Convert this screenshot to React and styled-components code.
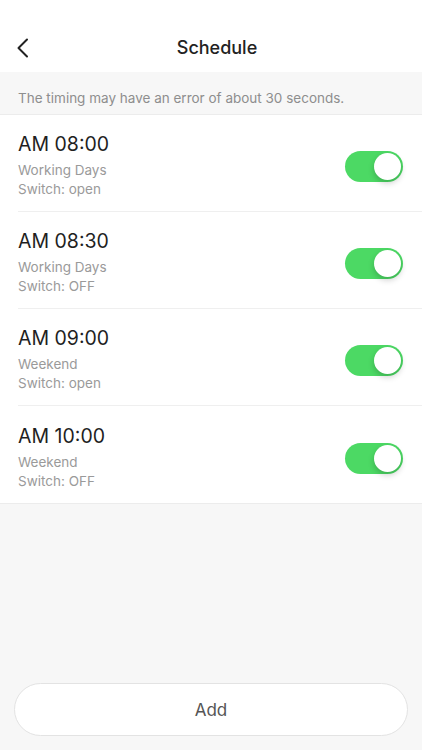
import React, { useState } from "react";
import styled, { createGlobalStyle } from "styled-components";

const GlobalStyle = createGlobalStyle`
  html, body {
    margin: 0;
    padding: 0;
    background: #f7f7f7;
  }
  body {
    font-family: Inter, "Noto Sans", "Liberation Sans", sans-serif;
    -webkit-font-smoothing: antialiased;
  }
`;

const Page = styled.div`
  width: 422px;
  height: 750px;
  display: flex;
  flex-direction: column;
  background: #f7f7f7;
`;

const Header = styled.header`
  height: 72px;
  background: #fff;
  display: grid;
  grid-template-columns: 72px 1fr 60px;
  align-items: end;
  padding-bottom: 12px;
  box-sizing: border-box;
`;

const BackButton = styled.button`
  border: none;
  background: none;
  padding: 0 0 0 16px;
  display: flex;
  align-items: center;
  height: 24px;
  cursor: pointer;
`;

const Title = styled.h1`
  margin: 0;
  text-align: center;
  font-size: 18px;
  font-weight: 500;
  color: #222;
  line-height: 24px;
`;

const Notice = styled.div`
  height: 43px;
  display: flex;
  align-items: flex-end;
  padding: 0 18px 8px;
  box-sizing: border-box;
  font-size: 13.5px;
  color: #8e8e8e;
  border-bottom: 1px solid #ececec;
`;

const List = styled.ul`
  list-style: none;
  margin: 0;
  padding: 0 0 0 18px;
  background: #fff;
  border-bottom: 1px solid #ececec;
`;

const Row = styled.li`
  height: 97px;
  box-sizing: border-box;
  display: flex;
  align-items: center;
  justify-content: space-between;
  padding: 4px 19px 0 0;
  border-bottom: ${(p) => (p.$last ? "none" : "1px solid #efefef")};
`;

const Info = styled.div`
  display: flex;
  flex-direction: column;
`;

const Time = styled.div`
  font-size: 19.5px;
  color: #1f1f1f;
  line-height: 26px;
  margin-bottom: 4px;
`;

const Sub = styled.div`
  font-size: 13.5px;
  color: #9a9a9a;
  line-height: 19px;
`;

const Toggle = styled.button`
  width: 58px;
  height: 31px;
  border-radius: 16px;
  border: none;
  padding: 0;
  margin-top: 3px;
  background: ${(p) => (p.$on ? "#4cd964" : "#e5e5e5")};
  position: relative;
  cursor: pointer;
  flex-shrink: 0;
`;

const Knob = styled.span`
  position: absolute;
  top: 2px;
  left: ${(p) => (p.$on ? "29px" : "2px")};
  width: 27px;
  height: 27px;
  border-radius: 50%;
  background: #fff;
  box-shadow: 0 3px 6px rgba(0, 0, 0, 0.2);
  transition: left 0.2s;
`;

const Spacer = styled.div`
  flex: 1;
`;

const Footer = styled.div`
  padding: 0 14px 14px;
`;

const AddButton = styled.button`
  width: 100%;
  height: 53px;
  border-radius: 27px;
  border: 1px solid #e3e3e3;
  background: #fff;
  font-family: inherit;
  font-size: 17px;
  color: #555;
  cursor: pointer;
`;

const initial = [
  { time: "AM 08:00", days: "Working Days", sw: "open", on: true },
  { time: "AM 08:30", days: "Working Days", sw: "OFF", on: true },
  { time: "AM 09:00", days: "Weekend", sw: "open", on: true },
  { time: "AM 10:00", days: "Weekend", sw: "OFF", on: true },
];

export default function App() {
  const [items, setItems] = useState(initial);
  const flip = (i) =>
    setItems(items.map((it, j) => (j === i ? { ...it, on: !it.on } : it)));

  return (
    <Page>
      <GlobalStyle />
      <Header>
        <BackButton aria-label="Back">
          <svg width="14" height="20" viewBox="0 0 14 20">
            <path d="M11 1.5 L2.5 10 L11 18.5" fill="none" stroke="#222" strokeWidth="2" strokeLinecap="round" strokeLinejoin="round" />
          </svg>
        </BackButton>
        <Title>Schedule</Title>
        <div />
      </Header>
      <Notice>The timing may have an error of about 30 seconds.</Notice>
      <List>
        {items.map((it, i) => (
          <Row key={it.time} $last={i === items.length - 1}>
            <Info>
              <Time>{it.time}</Time>
              <Sub>{it.days}</Sub>
              <Sub>Switch: {it.sw}</Sub>
            </Info>
            <Toggle $on={it.on} onClick={() => flip(i)}>
              <Knob $on={it.on} />
            </Toggle>
          </Row>
        ))}
      </List>
      <Spacer />
      <Footer>
        <AddButton>Add</AddButton>
      </Footer>
    </Page>
  );
}
